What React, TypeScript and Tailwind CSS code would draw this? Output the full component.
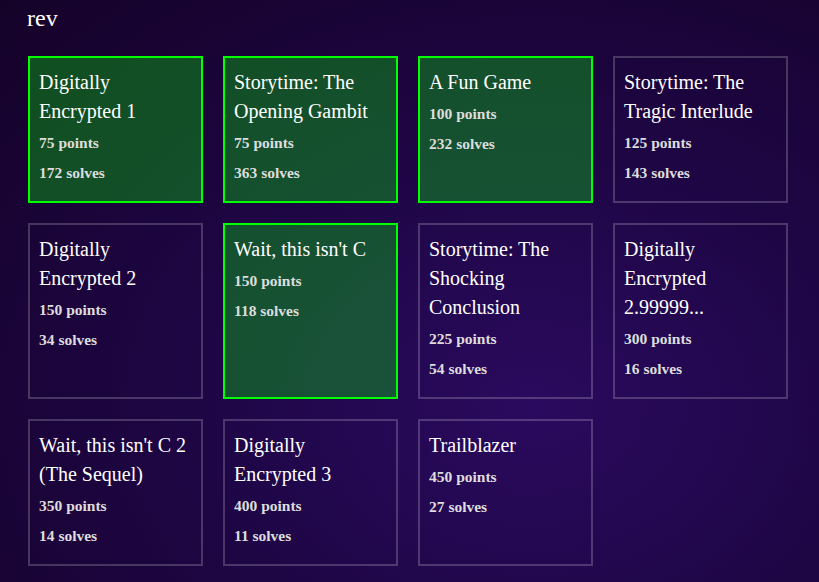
import React from "react";

interface Challenge {
    name: string;
    points: number;
    solves: number;
    solved: boolean;
}

const challenges: Challenge[] = [
    { name: "Digitally Encrypted 1", points: 75, solves: 172, solved: true },
    { name: "Storytime: The Opening Gambit", points: 75, solves: 363, solved: true },
    { name: "A Fun Game", points: 100, solves: 232, solved: true },
    { name: "Storytime: The Tragic Interlude", points: 125, solves: 143, solved: false },
    { name: "Digitally Encrypted 2", points: 150, solves: 34, solved: false },
    { name: "Wait, this isn't C", points: 150, solves: 118, solved: true },
    { name: "Storytime: The Shocking Conclusion", points: 225, solves: 54, solved: false },
    { name: "Digitally Encrypted 2.99999...", points: 300, solves: 16, solved: false },
    { name: "Wait, this isn't C 2 (The Sequel)", points: 350, solves: 14, solved: false },
    { name: "Digitally Encrypted 3", points: 400, solves: 11, solved: false },
    { name: "Trailblazer", points: 450, solves: 27, solved: false },
];

const ChallengeCard: React.FC<{ challenge: Challenge }> = ({ challenge }) => {
    return (
        <div
            className={
                challenge.solved
                    ? "border-2 border-[#00ff00] bg-[#00ff00]/30 pl-[9px] pr-[10px] pt-[10px] pb-[13px]"
                    : "border-2 border-white/20 pl-[9px] pr-[10px] pt-[10px] pb-[13px]"
            }
        >
            <div className="text-[20px] leading-[29px] text-white">{challenge.name}</div>
            <div className="mt-[2px] text-[15.5px] leading-[30px] font-bold text-[#dddddd]">
                {challenge.points} points
            </div>
            <div className="text-[15.5px] leading-[30px] font-bold text-[#dddddd]">
                {challenge.solves} solves
            </div>
        </div>
    );
};

export default function App() {
    return (
        <div
            className="min-h-[582px] w-full bg-[radial-gradient(ellipse_at_65%_70%,#2a0a5e_0%,#1e0645_45%,#150228_100%)] px-[28px] pt-[2px] pb-[16px]"
            style={{ fontFamily: '"Liberation Serif", "Times New Roman", serif' }}
        >
            <h1 className="mb-[22px] -ml-px text-[24px] leading-[32px] text-white">rev</h1>
            <div className="grid grid-cols-[repeat(4,175px)] gap-5">
                {challenges.map((c) => (
                    <ChallengeCard key={c.name} challenge={c} />
                ))}
            </div>
        </div>
    );
}
